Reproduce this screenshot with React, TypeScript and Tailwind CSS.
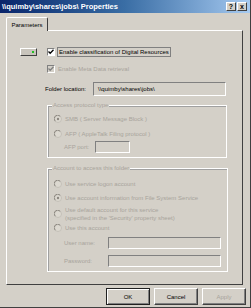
import React from "react";

function Check({ checked, disabled }: { checked?: boolean; disabled?: boolean }) {
  return (
    <span
      className={`inline-flex h-[8px] w-[8px] shrink-0 items-center justify-center border border-t-[#808080] border-l-[#808080] border-r-white border-b-white ${
        disabled ? "bg-[#d4d0c8]" : "bg-white"
      }`}
    >
      {checked && (
        <svg width="6" height="6" viewBox="0 0 6 6">
          <path d="M0.5 2.5 L2.2 4.3 L5.5 0.8" fill="none" stroke={disabled ? "#808080" : "#000"} strokeWidth="1.3" />
        </svg>
      )}
    </span>
  );
}

function Radio({ checked }: { checked?: boolean }) {
  return (
    <svg width="8" height="8" viewBox="0 0 8 8" className="shrink-0">
      <circle cx="4" cy="4" r="3.5" fill="#dcd8d0" stroke="#c4c0b8" />
      <path d="M1.2 6.2 A3.5 3.5 0 0 1 6.2 1.2" fill="none" stroke="#8c8880" />
      {checked && <circle cx="4" cy="4" r="1.2" fill="#8c8880" />}
    </svg>
  );
}

function Field({ className }: { className: string }) {
  return <div className={`h-[12px] border border-t-[#808080] border-l-[#808080] border-r-white border-b-white bg-[#d4d0c8] ${className}`} />;
}

function Btn({ label, def, disabled }: { label: string; def?: boolean; disabled?: boolean }) {
  return (
    <div
      className={`flex h-[17px] w-[44px] items-center justify-center border ${
        def ? "border-[#202020] shadow-[inset_1px_1px_0_#fff,inset_-1px_-1px_0_#808080]" : "border-t-white border-l-white border-r-[#404040] border-b-[#404040] shadow-[inset_-1px_-1px_0_#808080]"
      } ${disabled ? "text-[#a8a49c]" : "text-black"}`}
    >
      {label}
    </div>
  );
}

export default function App() {
  const muted = "text-[#a8a49c]";
  return (
    <div className="flex h-[308px] w-[251px] flex-col overflow-hidden border-r border-b border-[#404040] bg-[#d4d0c8] font-['Liberation_Sans',Arial,sans-serif] text-[6px] leading-none whitespace-nowrap text-black">
      {/* title bar */}
      <div className="flex h-[13px] shrink-0 items-center justify-between bg-gradient-to-r from-[#0a246a] via-[#3a6ea5] to-[#a6caf0] pl-[2px] pr-[3px]">
        <span className="text-[7.5px] font-bold text-white">\\quimby\shares\jobs\ Properties</span>
        <div className="flex gap-[1px]">
          <span className="flex h-[9px] w-[10px] items-center justify-center border border-t-white border-l-white border-r-[#404040] border-b-[#404040] bg-[#d4d0c8] text-[7px] font-bold">?</span>
          <span className="flex h-[9px] w-[10px] items-center justify-center border border-t-white border-l-white border-r-[#404040] border-b-[#404040] bg-[#d4d0c8] text-[7px] font-bold">x</span>
        </div>
      </div>

      {/* tabs + panel */}
      <div className="flex flex-col pl-[6px] pr-[7px] pt-[4px]">
        <div className="flex">
          <div className="relative z-10 -mb-[1px] flex h-[14px] w-[42px] items-center justify-center rounded-t-[2px] border border-b-0 border-t-white border-l-white border-r-[#404040] bg-[#d4d0c8]">
            Parameters
          </div>
        </div>
        <div className="flex h-[255px] flex-col border border-t-white border-l-white border-r-[#404040] border-b-[#404040] pt-[16px] pl-[13px] pr-[15px]">
          <div className="flex h-[10px] items-center">
            <div className="relative h-[8px] w-[17px] border border-t-white border-l-white border-r-[#404040] border-b-[#404040] bg-[#c8c4bc]">
              <span className="absolute right-[2px] top-[2px] h-[2px] w-[2px] bg-[#22c022]" />
            </div>
            <span className="ml-[10px]"><Check checked /></span>
            <span className="ml-[2px] border border-[#808080] px-[1px] py-[1px]">Enable classification of Digital Resources</span>
          </div>
          <div className={`mt-[7px] flex h-[10px] items-center pl-[27px] ${muted}`}>
            <Check checked disabled />
            <span className="ml-[3px]">Enable Meta Data retrieval</span>
          </div>
          <div className="mt-[8px] flex h-[14px] items-center pl-[25px]">
            <span className="w-[48px]">Folder location:</span>
            <div className="flex h-[14px] w-[133px] items-center border border-t-[#808080] border-l-[#808080] border-r-white border-b-white px-[4px]">\\quimby\shares\jobs\</div>
          </div>

          <div className={`relative ml-[27px] mt-[9px] h-[53px] w-[180px] border border-[#ffffff] shadow-[inset_1px_1px_0_#a0a0a0] ${muted}`}>
            <span className="absolute -top-[4px] left-[4px] bg-[#d4d0c8] px-[1px]">Access protocol type</span>
            <div className="mt-[9px] flex items-center pl-[6px]">
              <Radio checked />
              <span className="ml-[3px]">SMB ( Server Message Block )</span>
            </div>
            <div className="mt-[7px] flex items-center pl-[6px]">
              <Radio />
              <span className="ml-[3px]">AFP ( AppleTalk Filing protocol )</span>
            </div>
            <div className="mt-[3px] flex items-center pl-[16px]">
              <span>AFP port:</span>
              <Field className="ml-[6px] w-[35px]" />
            </div>
          </div>

          <div className={`relative ml-[27px] mt-[10px] h-[104px] w-[181px] border border-[#ffffff] shadow-[inset_1px_1px_0_#a0a0a0] ${muted}`}>
            <span className="absolute -top-[4px] left-[4px] bg-[#d4d0c8] px-[1px]">Account to access this folder</span>
            <div className="mt-[11px] flex items-center pl-[6px]">
              <Radio />
              <span className="ml-[3px]">Use service logon account</span>
            </div>
            <div className="mt-[6px] flex items-center pl-[6px]">
              <Radio checked />
              <span className="ml-[3px]">Use account information from File System Service</span>
            </div>
            <div className="mt-[5px] flex items-center pl-[6px]">
              <Radio />
              <div className="ml-[3px] flex flex-col gap-[2px]">
                <span>Use default account for this service</span>
                <span>(specified in the 'Security' property sheet)</span>
              </div>
            </div>
            <div className="mt-[3px] flex items-center pl-[6px]">
              <Radio />
              <span className="ml-[3px]">Use this account</span>
            </div>
            <div className="mt-[5px] flex items-center pl-[16px]">
              <span className="w-[44px]">User name:</span>
              <Field className="w-[113px]" />
            </div>
            <div className="mt-[6px] flex items-center pl-[16px]">
              <span className="w-[44px]">Password:</span>
              <Field className="w-[113px]" />
            </div>
          </div>
        </div>
      </div>

      {/* buttons */}
      <div className="mt-[3px] flex justify-end gap-[4px] pr-[4px]">
        <Btn label="OK" def />
        <Btn label="Cancel" />
        <Btn label="Apply" disabled />
      </div>
    </div>
  );
}
